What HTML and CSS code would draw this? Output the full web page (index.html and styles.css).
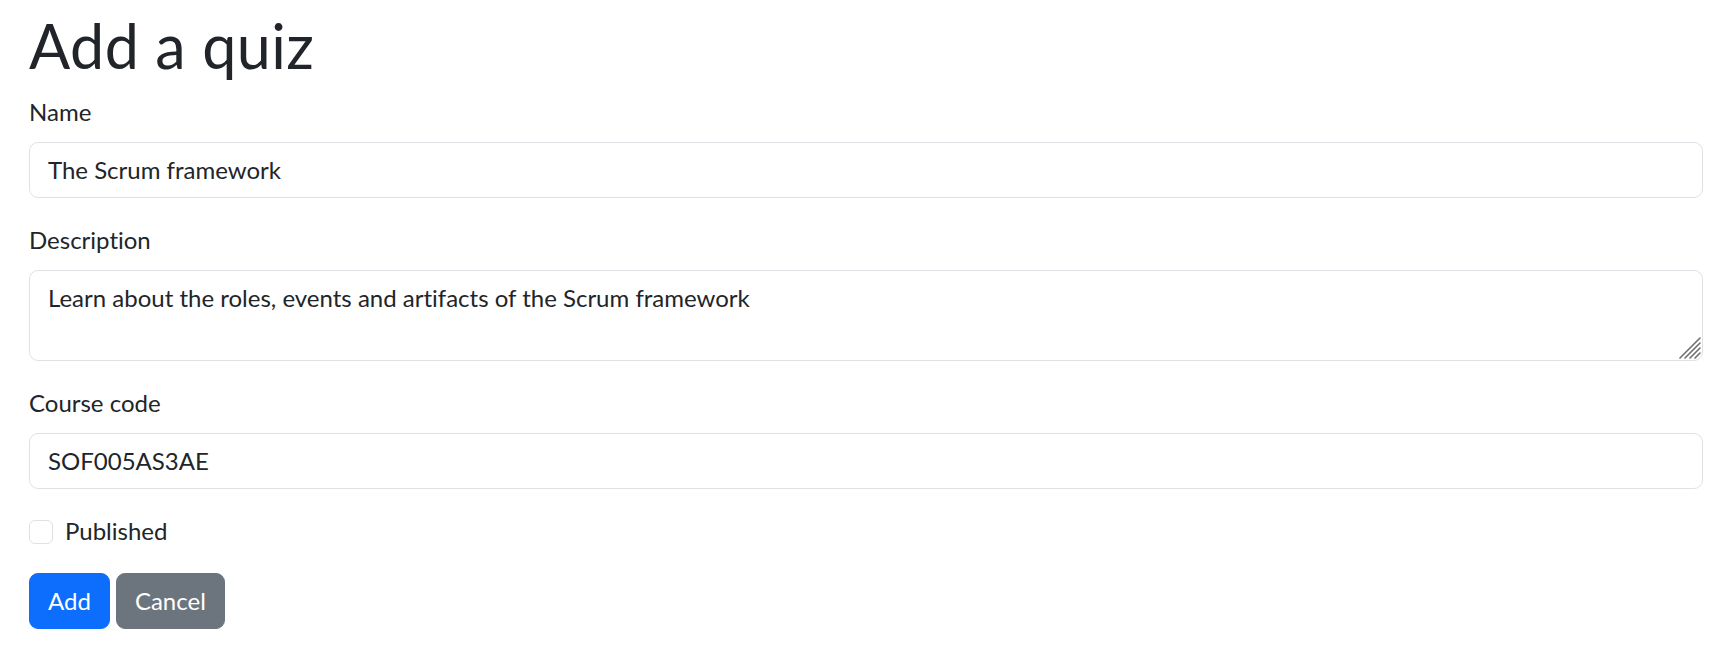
FILE: index.html
```html
<!DOCTYPE html>
<html lang="en">
<head>
<meta charset="utf-8">
<title>Add a quiz</title>
<link rel="stylesheet" href="styles.css">
</head>
<body>
<main class="page">
  <h1 class="title">Add a quiz</h1>
  <form class="form">
    <div class="field">
      <label class="label" for="name">Name</label>
      <input class="control" id="name" type="text" value="The Scrum framework">
    </div>
    <div class="field">
      <label class="label" for="desc">Description</label>
      <div class="area-wrap">
        <textarea class="control area" id="desc" rows="2">Learn about the roles, events and artifacts of the Scrum framework</textarea>
        <svg class="grip" width="22" height="22" viewBox="0 0 22 22" aria-hidden="true">
          <g stroke="#6e6e6e" stroke-width="1.6" stroke-linecap="round">
            <line x1="1" y1="21" x2="21" y2="1"/>
            <line x1="6" y1="21" x2="21" y2="6"/>
            <line x1="11" y1="21" x2="21" y2="11"/>
            <line x1="16" y1="21" x2="21" y2="16"/>
          </g>
        </svg>
      </div>
    </div>
    <div class="field">
      <label class="label" for="code">Course code</label>
      <input class="control" id="code" type="text" value="SOF005AS3AE">
    </div>
    <div class="field check">
      <input class="check-input" id="pub" type="checkbox">
      <label class="check-label" for="pub">Published</label>
    </div>
    <div class="actions">
      <button class="btn btn-primary" type="button">Add</button>
      <button class="btn btn-secondary" type="button">Cancel</button>
    </div>
  </form>
</main>
</body>
</html>
```

FILE: styles.css
```css
* { box-sizing: border-box; }
html, body { margin: 0; padding: 0; background: #fff; }
body {
  font-family: "Lato", "Noto Sans", sans-serif;
  font-size: 24px;
  line-height: 1.5;
  color: #212529;
  font-variant-ligatures: none;
  font-feature-settings: "liga" 0, "clig" 0;
}
.page { padding: 10px 29px 0 29px; }
.title {
  font-size: 61px;
  font-weight: 400;
  line-height: 72px;
  letter-spacing: 0.45px;
  margin: 0 0 12px 0;
}
.form { margin: 0; }
.field { margin-bottom: 24px; }
.label { display: inline-block; margin-bottom: 12px; }
.control {
  display: block;
  width: 100%;
  padding: 9px 18px;
  font: inherit;
  font-variant-ligatures: none;
  font-feature-settings: "liga" 0, "clig" 0;
  color: #212529;
  background: #fff;
  border: 1.5px solid #dee2e6;
  border-radius: 9px;
  outline: none;
}
.area-wrap { position: relative; }
.area { height: 91px; resize: none; }
.grip { position: absolute; right: 2px; bottom: 2px; }
.check {
  display: flex;
  align-items: flex-start;
  gap: 12px;
  min-height: 36px;
}
.check-input {
  appearance: none;
  -webkit-appearance: none;
  width: 24px;
  height: 24px;
  margin: 7px 0 0 0;
  border: 1.5px solid #dee2e6;
  border-radius: 6px;
  background: #fff;
  flex: none;
}
.actions { display: flex; gap: 6px; }
.btn {
  font: inherit;
  padding: 9px 18px;
  border-radius: 9px;
  border: 1.5px solid transparent;
  color: #fff;
  cursor: pointer;
}
.btn-primary { background: #0d6efd; border-color: #0d6efd; }
.btn-secondary { background: #6c757d; border-color: #6c757d; }
```
